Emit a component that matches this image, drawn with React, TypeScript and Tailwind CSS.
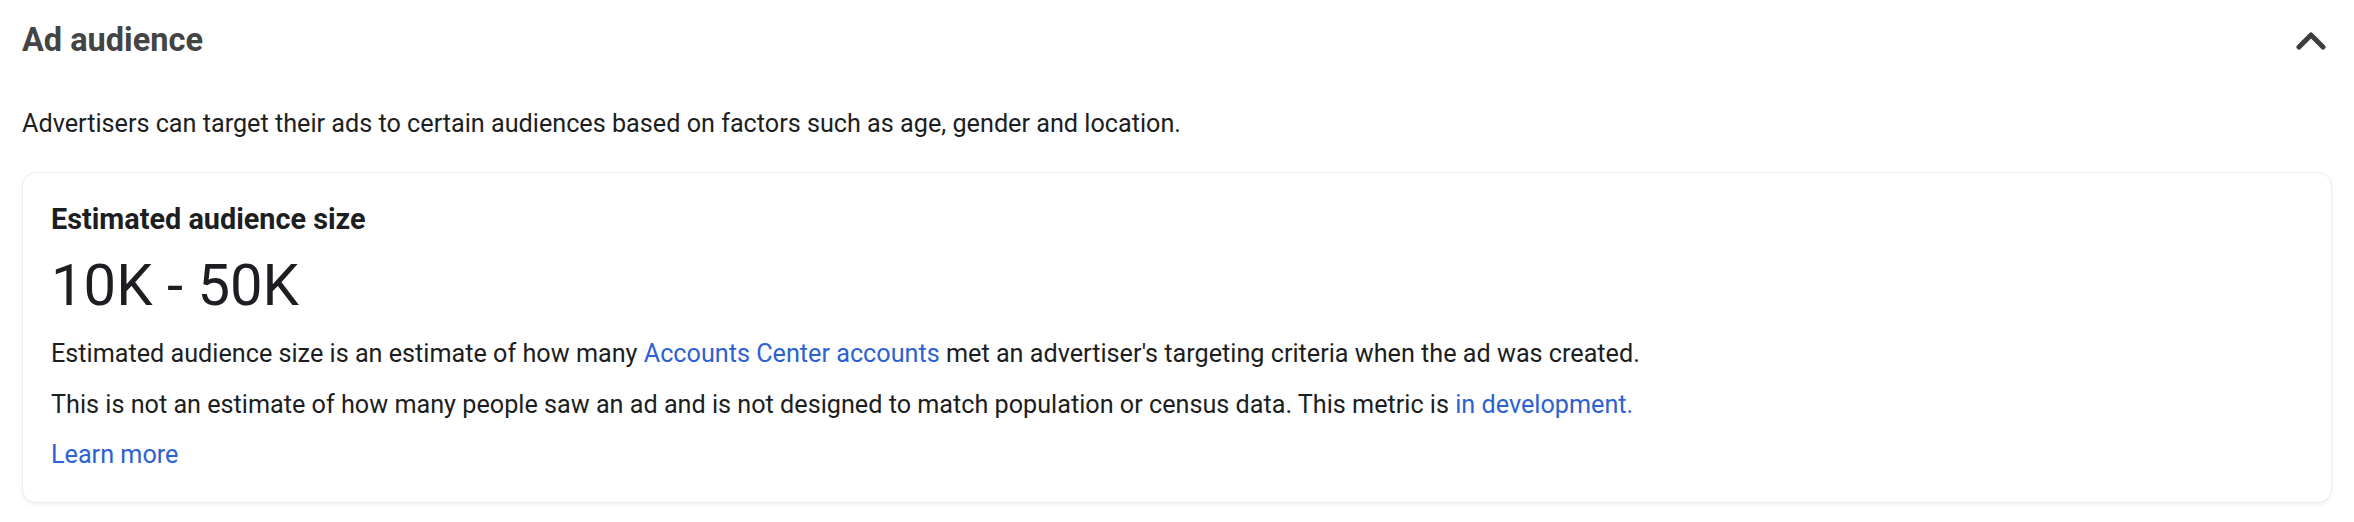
import React from "react";

export default function App() {
  return (
    <div className="w-[2354px] h-[522px] bg-white px-[22px] font-['Roboto',sans-serif]">
      {/* Header */}
      <div className="flex justify-between items-center h-[80px]">
        <h2 className="text-[32.5px] leading-[40px] font-bold text-[#444444]">Ad audience</h2>
        <button className="mr-[6px] flex items-center justify-center">
          <svg width="30" height="19" viewBox="0 0 30 19" fill="none">
            <path
              d="M3 16 L15 4 L27 16"
              stroke="#3d3d3d"
              strokeWidth="5"
              strokeLinecap="round"
              strokeLinejoin="round"
            />
          </svg>
        </button>
      </div>

      <p className="mt-[28px] text-[25.2px] leading-[32px] text-[#1c1e21]">
        Advertisers can target their ads to certain audiences based on factors such as age, gender and location.
      </p>

      {/* Card */}
      <div className="mt-[32px] rounded-[14px] border border-[#ececec] bg-white px-[28px] pt-[29px] pb-[31px] shadow-[0_2px_4px_rgba(0,0,0,0.06)]">
        <h3 className="text-[28.8px] leading-[34px] font-bold text-[#1c1e21]">Estimated audience size</h3>
        <div className="mt-[15px] text-[58px] leading-[68px] text-[#1c1e21]">10K - 50K</div>
        <p className="mt-[19px] text-[25.2px] leading-[32px] text-[#1c1e21]">
          Estimated audience size is an estimate of how many{" "}
          <a className="text-[#2c62d1]">Accounts Center accounts</a> met an advertiser's targeting criteria when the ad
          was created.
        </p>
        <p className="mt-[19px] text-[25.2px] leading-[32px] text-[#1c1e21]">
          This is not an estimate of how many people saw an ad and is not designed to match population or census data.
          This metric is <a className="text-[#2c62d1]">in development.</a>
        </p>
        <a className="mt-[18px] block text-[25.2px] leading-[32px] text-[#2c62d1]">Learn more</a>
      </div>
    </div>
  );
}
